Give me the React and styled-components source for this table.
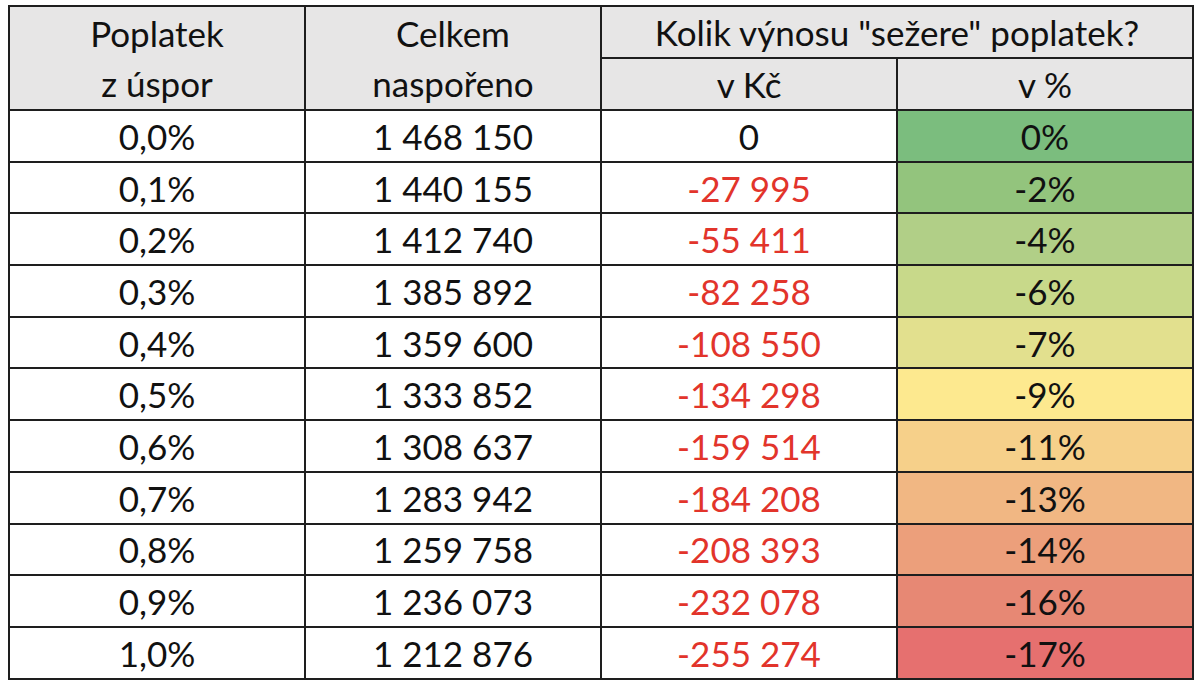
import styled, { createGlobalStyle } from 'styled-components';

const GlobalStyle = createGlobalStyle`
  html, body {
    margin: 0;
    padding: 0;
    background: #ffffff;
  }
`;

const rows = [
  { fee: '0,0%', total: '1 468 150', lost: '0', pct: '0%', color: '#7bbd7e' },
  { fee: '0,1%', total: '1 440 155', lost: '-27 995', pct: '-2%', color: '#93c47d' },
  { fee: '0,2%', total: '1 412 740', lost: '-55 411', pct: '-4%', color: '#b1cf87' },
  { fee: '0,3%', total: '1 385 892', lost: '-82 258', pct: '-6%', color: '#c8d98a' },
  { fee: '0,4%', total: '1 359 600', lost: '-108 550', pct: '-7%', color: '#e2e08e' },
  { fee: '0,5%', total: '1 333 852', lost: '-134 298', pct: '-9%', color: '#fde98f' },
  { fee: '0,6%', total: '1 308 637', lost: '-159 514', pct: '-11%', color: '#f6d08a' },
  { fee: '0,7%', total: '1 283 942', lost: '-184 208', pct: '-13%', color: '#f1b783' },
  { fee: '0,8%', total: '1 259 758', lost: '-208 393', pct: '-14%', color: '#ec9f7b' },
  { fee: '0,9%', total: '1 236 073', lost: '-232 078', pct: '-16%', color: '#e78874' },
  { fee: '1,0%', total: '1 212 876', lost: '-255 274', pct: '-17%', color: '#e6706f' },
];

export default function App() {
  return (
    <>
      <GlobalStyle />
      <Page>
        <FeeTable>
          <colgroup>
            <Column />
            <Column />
            <Column />
            <Column />
          </colgroup>
          <thead>
            <tr>
              <HeadCell rowSpan={2}>
                Poplatek
                <br />z úspor
              </HeadCell>
              <HeadCell rowSpan={2}>
                Celkem
                <br />
                naspořeno
              </HeadCell>
              <HeadCell colSpan={2}>Kolik výnosu "sežere" poplatek?</HeadCell>
            </tr>
            <tr>
              <HeadCell>v Kč</HeadCell>
              <HeadCell>v %</HeadCell>
            </tr>
          </thead>
          <tbody>
            {rows.map((row) => (
              <tr key={row.fee}>
                <Cell>{row.fee}</Cell>
                <Cell>{row.total}</Cell>
                <Cell $negative={row.lost !== '0'}>{row.lost}</Cell>
                <Cell style={{ background: row.color }}>{row.pct}</Cell>
              </tr>
            ))}
          </tbody>
        </FeeTable>
      </Page>
    </>
  );
}

const Page = styled.div`
  padding: 5px 0 0 8px;
`;

const FeeTable = styled.table`
  border-collapse: collapse;
  width: 1186px;
  table-layout: fixed;
  font-family: Lato, 'Open Sans', sans-serif;
  font-size: 35px;
  color: #111;

  tr {
    height: 51.7px;
  }
`;

const Column = styled.col`
  width: 25%;
`;

const HeadCell = styled.th`
  background: #e7e6e6;
  border: 2px solid #1e1e1e;
  font-weight: normal;
  text-align: center;
  line-height: 50px;
  padding: 0;
  white-space: nowrap;
`;

const Cell = styled.td`
  border: 2px solid #1e1e1e;
  text-align: center;
  line-height: 46px;
  padding: 0;
  color: ${(props) => (props.$negative ? '#e2342b' : '#111')};
`;
